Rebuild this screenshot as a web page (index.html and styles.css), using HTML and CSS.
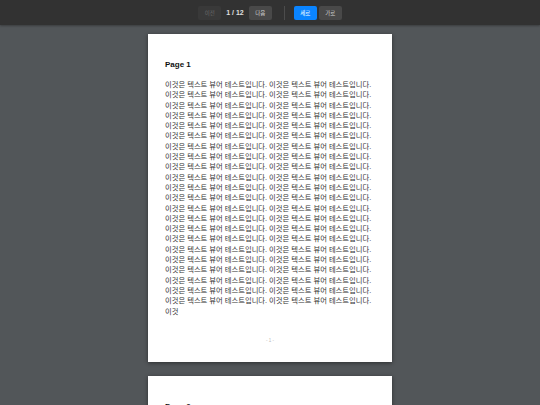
FILE: index.html
```html
<!DOCTYPE html>
<html lang="ko">
<head>
<meta charset="utf-8">
<title>Text Viewer</title>
<link rel="stylesheet" href="styles.css">
</head>
<body>
<header class="toolbar">
  <div class="group">
    <button class="btn" disabled>이전</button>
    <span class="pageinfo">1 / 12</span>
    <button class="btn">다음</button>
  </div>
  <span class="divider"></span>
  <div class="group tight">
    <button class="btn active">세로</button>
    <button class="btn">가로</button>
  </div>
</header>
<main class="viewer">
  <section class="page">
    <h2 class="page-title">Page 1</h2>
    <div class="page-body"><p id="p1" class="page-text"></p></div>
    <div class="page-num">- 1 -</div>
  </section>
  <section class="page">
    <h2 class="page-title">Page 2</h2>
    <div class="page-body"><p id="p2" class="page-text"></p></div>
    <div class="page-num">- 2 -</div>
  </section>
</main>
<script>
  var s = "이것은 텍스트 뷰어 테스트입니다. ";
  var t = "";
  for (var i = 0; i < 44; i++) t += s;
  document.getElementById("p1").textContent = t + "이것";
  var u = "은 텍스트 뷰어 테스트입니다. ";
  for (var j = 0; j < 44; j++) u += s;
  document.getElementById("p2").textContent = u;
</script>
</body>
</html>
```
FILE: styles.css
```css
html, body {
  margin: 0;
  padding: 0;
  height: 100%;
  overflow: hidden;
}
body {
  background: #525659;
  font-family: "Liberation Sans", "Noto Sans CJK KR", sans-serif;
}
.toolbar {
  height: 25px;
  background: #323232;
  display: flex;
  align-items: center;
  justify-content: center;
  box-shadow: 0 1px 2px rgba(0,0,0,0.3);
  position: relative;
  z-index: 1;
}
.group {
  display: flex;
  align-items: center;
  gap: 4px;
}
.group.tight {
  gap: 2px;
}
.btn {
  height: 14px;
  width: 23px;
  padding: 0;
  border: none;
  border-radius: 2px;
  background: #494949;
  color: #d0d0d0;
  font-family: "Noto Sans CJK KR", sans-serif;
  font-size: 5.5px;
  line-height: 14px;
}
.btn[disabled] {
  background: #393939;
  color: #6a6a6a;
}
.btn.active {
  background: #0a84ff;
  color: #ffffff;
}
.pageinfo {
  color: #e0e0e0;
  font-size: 7px;
  font-weight: bold;
  margin: 0 1px;
}
.divider {
  width: 1px;
  height: 14px;
  background: #4c4c4c;
  margin: 0 9px 0 12px;
}
.viewer {
  height: 380px;
  overflow: hidden;
  display: flex;
  flex-direction: column;
  align-items: center;
  gap: 14px;
  padding-top: 9px;
}
.page {
  flex: none;
  width: 244px;
  height: 328px;
  background: #ffffff;
  box-shadow: 0 1px 4px rgba(0,0,0,0.45);
  box-sizing: border-box;
  padding: 26px 17px 0 17px;
  display: flex;
  flex-direction: column;
}
.page-title {
  margin: 0 0 10px 0;
  font-size: 8px;
  line-height: 10px;
  font-weight: bold;
  color: #111111;
}
.page-body {
  height: 237px;
  overflow: hidden;
}
.page-text {
  margin: 0;
  font-size: 7.3px;
  line-height: 10.3px;
  color: #333333;
  word-break: keep-all;
}
.page-num {
  margin-top: 20px;
  text-align: center;
  font-size: 4.5px;
  line-height: 7px;
  color: #bbbbbb;
}
```
